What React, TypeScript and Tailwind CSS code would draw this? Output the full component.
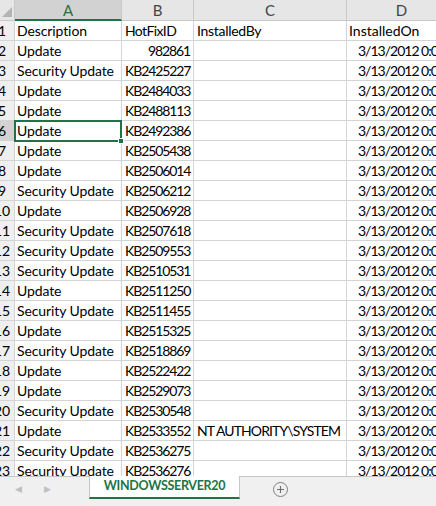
import React from 'react';

const rows: [string, string, string][] = [
  ['Update', '982861', ''],
  ['Security Update', 'KB2425227', ''],
  ['Update', 'KB2484033', ''],
  ['Update', 'KB2488113', ''],
  ['Update', 'KB2492386', ''],
  ['Update', 'KB2505438', ''],
  ['Update', 'KB2506014', ''],
  ['Security Update', 'KB2506212', ''],
  ['Update', 'KB2506928', ''],
  ['Security Update', 'KB2507618', ''],
  ['Security Update', 'KB2509553', ''],
  ['Security Update', 'KB2510531', ''],
  ['Update', 'KB2511250', ''],
  ['Security Update', 'KB2511455', ''],
  ['Update', 'KB2515325', ''],
  ['Security Update', 'KB2518869', ''],
  ['Update', 'KB2522422', ''],
  ['Update', 'KB2529073', ''],
  ['Security Update', 'KB2530548', ''],
  ['Update', 'KB2533552', 'NT AUTHORITY\\SYSTEM'],
  ['Security Update', 'KB2536275', ''],
  ['Security Update', 'KB2536276', ''],
];

const cell = 'h-[20px] border-r border-b border-[#d4d4d4] overflow-hidden whitespace-nowrap leading-[19px] text-[14px] text-black';

function Row({ n, a, b, c, d, selected }: { n: number; a: string; b: string; c: string; d: string; selected?: boolean }) {
  const numeric = /^\d+$/.test(b);
  return (
    <div className="flex">
      <div className={`${cell} w-[25px] shrink-0 text-center ${selected ? 'bg-[#d2d2d2] text-[#217346]' : 'bg-[#efefef] text-[#444]'} border-[#c8c8c8]`}>{n}</div>
      <div className={`${cell} w-[107px] shrink-0 pl-[2px] tracking-[-0.1px]`}>{a}</div>
      <div className={`${cell} w-[72px] shrink-0 px-[3px] ${n > 1 ? 'text-[13.5px] tracking-[-1.1px]' : 'tracking-[-0.6px]'} ${numeric ? 'text-right' : ''}`}>{b}</div>
      <div className={`${cell} w-[153px] shrink-0 px-[3px] ${n > 1 ? 'text-[13.5px] tracking-[-0.9px]' : 'tracking-[-0.3px]'}`}>{c}</div>
      <div className={`${cell} w-[110px] shrink-0 ${n > 1 ? 'pl-[11px] text-[13.5px] tracking-[-1px]' : 'pl-[2px]'}`}>{d}</div>
    </div>
  );
}

export default function App() {
  return (
    <div className="w-[436px] h-[506px] overflow-hidden bg-white flex flex-col" style={{ fontFamily: 'Lato, "Open Sans", sans-serif' }}>
      <div className="h-[476px] overflow-hidden relative shrink-0">
        <div className="ml-[-10px]">
          {/* column headers */}
          <div className="flex h-[21px] text-[15px] text-[#444]">
            <div className="w-[25px] shrink-0 bg-[#e6e6e6] border-r border-b border-[#c8c8c8] relative">
              <div className="absolute right-[2px] bottom-[3px] w-0 h-0 border-l-[10px] border-l-transparent border-b-[10px] border-b-[#b4b4b4]" />
            </div>
            <div className="w-[107px] shrink-0 bg-[#d2d2d2] border-r border-[#c8c8c8] border-b-2 border-b-[#217346] text-center leading-[20px] text-[#217346]">A</div>
            <div className="w-[72px] shrink-0 bg-[#e6e6e6] border-r border-b border-[#c8c8c8] text-center leading-[20px]">B</div>
            <div className="w-[153px] shrink-0 bg-[#e6e6e6] border-r border-b border-[#c8c8c8] text-center leading-[20px]">C</div>
            <div className="w-[110px] shrink-0 bg-[#e6e6e6] border-r border-b border-[#c8c8c8] text-center leading-[20px]">D</div>
          </div>
          <Row n={1} a="Description" b="HotFixID" c="InstalledBy" d="InstalledOn" />
          {rows.map((r, i) => (
            <Row key={i} n={i + 2} a={r[0]} b={r[1]} c={r[2]} d="3/13/2012 0:00" selected={i + 2 === 6} />
          ))}
        </div>
        {/* active cell */}
        <div className="absolute left-[14px] top-[120px] w-[108px] h-[22px] border-2 border-[#217346] pointer-events-none" />
        <div className="absolute left-[118px] top-[138px] w-[6px] h-[6px] bg-[#217346] border border-white" />
      </div>
      {/* sheet tabs */}
      <div className="flex-1 bg-[#f0f0f0] border-t border-[#c6c6c6] relative flex items-start">
        <div className="w-[89px] h-[23px] flex items-center text-[#c0c0c0] text-[9px]">
          <span className="ml-[15px]">◀</span>
          <span className="ml-[22px]">▶</span>
        </div>
        <div className="w-[151px] h-[23px] -mt-px bg-white border-x border-[#c6c6c6] border-b-2 border-b-[#217346] flex items-center justify-center text-[12.5px] tracking-[-0.3px] font-bold text-[#217346] leading-none">
          WINDOWSSERVER20
        </div>
        <div className="ml-[33px] mt-[5px] w-[15px] h-[15px] rounded-full border border-[#808080] flex items-center justify-center">
          <svg width="9" height="9" viewBox="0 0 9 9">
            <path d="M4.5 1v7M1 4.5h7" stroke="#707070" strokeWidth="1.2" />
          </svg>
        </div>
      </div>
    </div>
  );
}
